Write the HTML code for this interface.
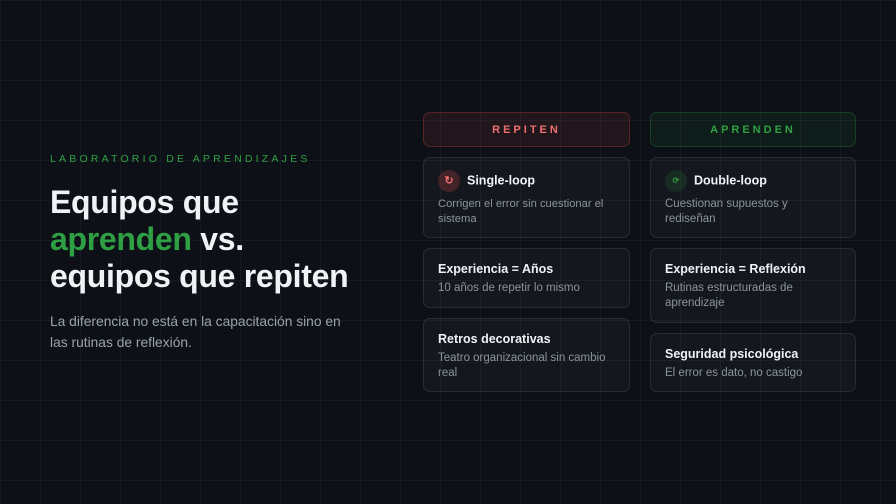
<!DOCTYPE html>
<html><head><meta charset="utf-8"><style>
*{margin:0;padding:0;box-sizing:border-box}
body{width:896px;height:504px;overflow:hidden;background:#0d1117;font-family:"Liberation Sans",sans-serif;position:relative;
background-image:linear-gradient(rgba(255,255,255,0.04) 1px,transparent 1px),linear-gradient(90deg,rgba(255,255,255,0.04) 1px,transparent 1px);background-size:40px 40px;background-position:0 0}
.a{position:absolute}
.lab{left:50px;top:153px;font-size:10.5px;letter-spacing:3.2px;color:#2ea043}
h1{position:absolute;left:50px;top:184px;font-size:32px;line-height:37px;color:#f0f3f6;font-weight:700;letter-spacing:-0.3px}
h1 span{color:#2ea043}
.sub{left:50px;top:311px;font-size:13.8px;line-height:21px;color:#9aa3ad;width:360px}
.hd{height:35px;border-radius:7px;text-align:center;line-height:35px;font-size:11px;font-weight:700;letter-spacing:3px}
.r{background:rgba(248,81,73,0.09);border:1px solid rgba(248,81,73,0.25);color:#f07070}
.g{background:rgba(46,160,67,0.09);border:1px solid rgba(46,160,67,0.25);color:#2ea043}
.c{border-radius:7px;background:rgba(255,255,255,0.03);border:1px solid rgba(255,255,255,0.09);padding:0 22px 0 14px}
.t{font-size:12.5px;font-weight:700;color:#f0f3f6}
.d{font-size:11.5px;line-height:15px;color:#8b949e;margin-top:5px}
.ic{display:inline-block;width:22px;height:22px;border-radius:50%;vertical-align:middle;margin-right:7px;text-align:center;line-height:22px;font-size:11px}
</style></head><body>
<div class="a lab">LABORATORIO DE APRENDIZAJES</div>
<h1>Equipos que<br><span>aprenden</span> vs.<br>equipos que repiten</h1>
<div class="a sub">La diferencia no está en la capacitación sino en<br>las rutinas de reflexión.</div>

<div class="a hd r" style="left:423px;top:112px;width:207px">REPITEN</div>
<div class="a hd g" style="left:650px;top:112px;width:206px">APRENDEN</div>

<div class="a c" style="left:423px;top:157px;width:207px;height:81px;padding-top:12px;padding-right:8px">
<div class="t"><span class="ic" style="background:rgba(248,81,73,0.2);color:#f07070">↻</span>Single-loop</div>
<div class="d" style="margin-top:5px;font-size:11.2px">Corrigen el error sin cuestionar el sistema</div></div>
<div class="a c" style="left:423px;top:248px;width:207px;height:60px;padding-top:13px">
<div class="t">Experiencia = Años</div><div class="d">10 años de repetir lo mismo</div></div>
<div class="a c" style="left:423px;top:318px;width:207px;height:74px;padding-top:13px">
<div class="t">Retros decorativas</div><div class="d">Teatro organizacional sin cambio real</div></div>

<div class="a c" style="left:650px;top:157px;width:206px;height:81px;padding-top:12px">
<div class="t"><span class="ic" style="background:rgba(46,160,67,0.15);color:#2ea043;font-size:8px">⟳</span>Double-loop</div>
<div class="d" style="margin-top:5px">Cuestionan supuestos y rediseñan</div></div>
<div class="a c" style="left:650px;top:248px;width:206px;height:75px;padding-top:13px">
<div class="t">Experiencia = Reflexión</div><div class="d">Rutinas estructuradas de aprendizaje</div></div>
<div class="a c" style="left:650px;top:333px;width:206px;height:59px;padding-top:13px">
<div class="t">Seguridad psicológica</div><div class="d">El error es dato, no castigo</div></div>
</body></html>
